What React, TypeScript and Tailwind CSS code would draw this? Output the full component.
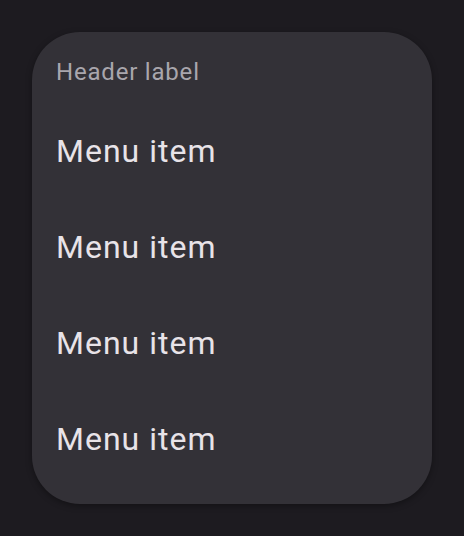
const ITEMS = ["Menu item", "Menu item", "Menu item", "Menu item"];

export default function App() {
  return (
    <div className="min-h-screen w-full bg-[#1d1b20] p-8" style={{ fontFamily: "Roboto, 'Noto Sans', sans-serif" }}>
      <div className="w-[400px] rounded-[48px] bg-[#333137] pb-[17px] shadow-[0_2px_6px_rgba(0,0,0,0.35)]">
        <div className="px-6 pt-[28px] pb-[19px] text-[24px] leading-[24px] tracking-[0.8px] text-[#a9a6ad]">Header label</div>
        {ITEMS.map((label, i) => (
          <div key={i} className="flex h-[96px] items-center px-6 text-[32px] tracking-[1px] text-[#e8e3e8]">
            {label}
          </div>
        ))}
      </div>
    </div>
  );
}
